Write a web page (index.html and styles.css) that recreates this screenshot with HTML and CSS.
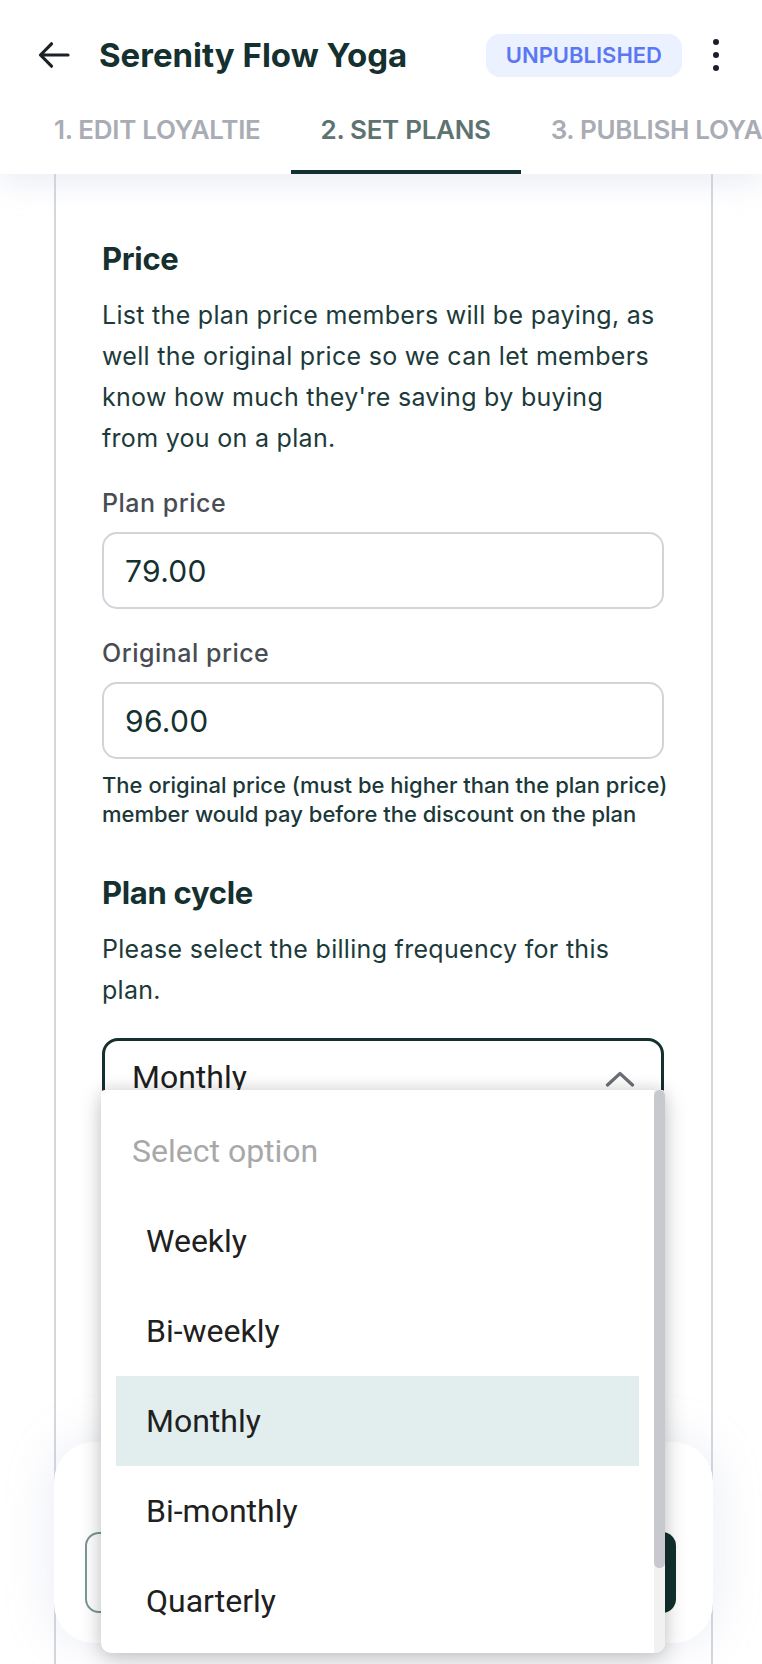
FILE: index.html
```html
<!DOCTYPE html>
<html lang="en">
<head>
<meta charset="utf-8">
<title>Serenity Flow Yoga – Set plans</title>
<link rel="stylesheet" href="styles.css">
</head>
<body>
<div class="screen">
  <header class="topbar">
    <div class="titlebar">
      <button class="back" aria-label="Back">
        <svg viewBox="0 0 36 36" width="36" height="36"><path d="M32 18H4.5M15.5 6.8L4.5 18l11 11.2" fill="none" stroke="#1d2127" stroke-width="3.2" stroke-linecap="round" stroke-linejoin="round"/></svg>
      </button>
      <h1 class="title">Serenity Flow Yoga</h1>
      <span class="badge">UNPUBLISHED</span>
      <button class="kebab" aria-label="More"><span></span><span></span><span></span></button>
    </div>
    <nav class="tabs">
      <a class="tab">1. EDIT LOYALTIE</a>
      <a class="tab active">2. SET PLANS</a>
      <a class="tab">3. PUBLISH LOYALTIE</a>
    </nav>
  </header>

  <main class="content">
    <section class="card">
      <h2 class="heading">Price</h2>
      <p class="desc">List the plan price members will be paying, as<br>well the original price so we can let members<br>know how much they're saving by buying<br>from you on a plan.</p>

      <label class="label">Plan price</label>
      <div class="field">79.00</div>

      <label class="label">Original price</label>
      <div class="field">96.00</div>
      <p class="help">The original price (must be higher than the plan price)<br>member would pay before the discount on the plan</p>

      <h2 class="heading heading-cycle">Plan cycle</h2>
      <p class="desc">Please select the billing frequency for this<br>plan.</p>

      <div class="select">
        <span class="select-value">Monthly</span>
        <svg class="chev" viewBox="0 0 30 16" width="30" height="16"><path d="M2.5 14L15 2.5 27.5 14" fill="none" stroke="#6c6f75" stroke-width="3.2" stroke-linecap="round" stroke-linejoin="round"/></svg>
      </div>
    </section>
  </main>

  <div class="footer-panel">
    <button class="btn btn-outline" aria-label="Back"></button>
    <button class="btn btn-solid" aria-label="Save plan"></button>
  </div>

  <div class="dropdown">
    <ul class="options">
      <li class="placeholder">Select option</li>
      <li class="option">Weekly</li>
      <li class="option">Bi-weekly</li>
      <li class="option selected">Monthly</li>
      <li class="option">Bi-monthly</li>
      <li class="option">Quarterly</li>
    </ul>
    <div class="scrollbar"><div class="thumb"></div></div>
  </div>
</div>
</body>
</html>
```

FILE: styles.css
```css
* { box-sizing: border-box; }

html, body {
  margin: 0;
  padding: 0;
  background: #ffffff;
}

body {
  font-family: Inter, "Noto Sans", sans-serif;
  color: #14302f;
}

.screen {
  position: relative;
  width: 762px;
  height: 1664px;
  overflow: hidden;
  background: #ffffff;
}

/* ---------- header ---------- */
.topbar {
  position: relative;
  z-index: 3;
  height: 174px;
  background: #ffffff;
  box-shadow: 0 10px 28px rgba(185, 195, 220, 0.28);
  display: flex;
  flex-direction: column;
}

.titlebar {
  display: flex;
  align-items: center;
  height: 44px;
  margin-top: 33px;
  padding: 0 34px 0 36px;
}

.back {
  width: 36px;
  height: 36px;
  padding: 0;
  border: 0;
  background: none;
  display: flex;
}

.title {
  margin: 0 0 0 27px;
  font-size: 33px;
  line-height: 40px;
  font-weight: 700;
  letter-spacing: 0;
  color: #14302f;
}

.badge {
  margin-left: auto;
  height: 43px;
  padding: 0 20px;
  border-radius: 14px;
  background: #ebf1fe;
  color: #5a78f3;
  font-size: 22px;
  line-height: 43px;
  font-weight: 600;
  letter-spacing: 0;
}

.kebab {
  margin-left: 22px;
  width: 24px;
  padding: 0;
  border: 0;
  background: none;
  display: flex;
  flex-direction: column;
  align-items: center;
  gap: 7px;
}

.kebab span {
  width: 6px;
  height: 6px;
  border-radius: 50%;
  background: #1b1f2a;
}

.tabs {
  margin-top: auto;
  display: flex;
  padding-left: 24px;
  white-space: nowrap;
  overflow: hidden;
}

.tab {
  flex: none;
  padding: 24px 30px 24px;
  border-bottom: 4px solid transparent;
  font-size: 26px;
  line-height: 32px;
  font-weight: 600;
  letter-spacing: -0.012em;
  color: #a9acb4;
}

.tab.active {
  color: #5d7371;
  border-bottom-color: #12302f;
}

/* ---------- content ---------- */
.content {
  padding-left: 54px;
}

.card {
  width: 659px;
  min-height: 1600px;
  background: #ffffff;
  border-left: 2px solid #d5d7dd;
  border-right: 2px solid #d5d7dd;
  padding: 65px 47px 0 46px;
}

.heading {
  margin: 0 0 16px;
  font-size: 31px;
  line-height: 40px;
  font-weight: 700;
  letter-spacing: -0.01em;
  color: #14302f;
}

.heading-cycle {
  margin-top: 44px;
}

.desc {
  margin: 0;
  font-size: 25px;
  line-height: 41px;
  font-weight: 400;
  letter-spacing: 0.012em;
  color: #1c3a3a;
  white-space: nowrap;
}

.label {
  display: block;
  margin-top: 28px;
  font-size: 25px;
  line-height: 32px;
  font-weight: 500;
  letter-spacing: 0.02em;
  color: #484c54;
}

.field {
  margin-top: 13px;
  height: 77px;
  border: 2px solid #d2d4d9;
  border-radius: 15px;
  padding-left: 21px;
  display: flex;
  align-items: center;
  font-size: 30px;
  font-weight: 400;
  letter-spacing: 0.01em;
  color: #14302f;
}

.help {
  margin: 12px 0 0;
  font-size: 22px;
  line-height: 29px;
  font-weight: 500;
  letter-spacing: 0;
  color: #1b3838;
  white-space: nowrap;
}

.select {
  margin-top: 27px;
  height: 77px;
  border: 3px solid #14302f;
  border-radius: 16px;
  padding: 0 27px;
  display: flex;
  align-items: center;
  justify-content: space-between;
}

.select-value {
  font-family: Roboto, "Noto Sans", sans-serif;
  font-size: 32px;
  color: #1e1e1e;
}

.chev {
  margin-top: 4px;
  margin-right: -1px;
}

/* ---------- footer panel ---------- */
.footer-panel {
  position: absolute;
  z-index: 2;
  left: 54px;
  top: 1442px;
  width: 659px;
  height: 201px;
  border-radius: 40px;
  background: #ffffff;
  box-shadow: 0 0 50px rgba(160, 170, 210, 0.22);
  display: flex;
  gap: 20px;
  padding: 90px 37px 30px 31px;
}

.btn {
  flex: 1;
  height: 81px;
  border-radius: 14px;
}

.btn-outline {
  border: 2px solid #7e9696;
  background: #ffffff;
}

.btn-solid {
  border: 0;
  background: #12302f;
}

/* ---------- dropdown (open select list) ---------- */
.dropdown {
  position: absolute;
  z-index: 4;
  left: 101px;
  top: 1090px;
  width: 564px;
  height: 563px;
  background: #ffffff;
  border-radius: 4px 4px 10px 10px;
  box-shadow: 0 6px 22px rgba(0, 0, 0, 0.22), 0 -4px 14px rgba(0, 0, 0, 0.06);
  overflow: hidden;
}

.options {
  list-style: none;
  margin: 0;
  padding: 16px 11px 0 0;
  font-family: Roboto, "Noto Sans", sans-serif;
  font-size: 32px;
  line-height: 90px;
  color: #202020;
}

.placeholder {
  padding-left: 31px;
  color: #a8a8a8;
}

.option {
  margin: 0 15px;
  padding-left: 30px;
}

.option.selected {
  background: #e2eeee;
}

.scrollbar {
  position: absolute;
  top: 0;
  right: 0;
  bottom: 0;
  width: 11px;
  background: #f1f1f1;
}

.thumb {
  height: 478px;
  border-radius: 6px;
  background: #c8c9ce;
}
```
